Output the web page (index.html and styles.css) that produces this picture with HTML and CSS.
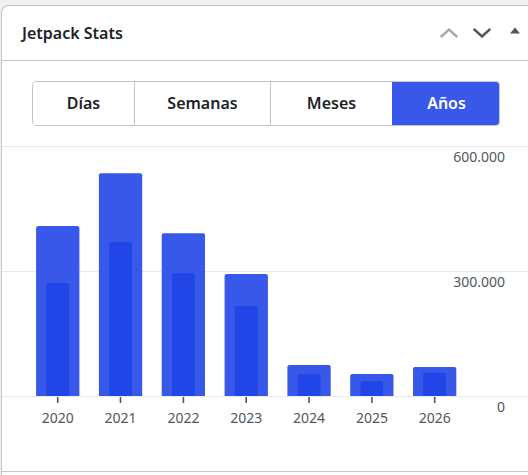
FILE: index.html
```html
<!DOCTYPE html>
<html>
<head>
  <meta charset="UTF-8">
  <title>Jetpack Stats</title>
  <link rel="stylesheet" href="styles.css">
</head>
<body>

  <div class="postbox">
    <div class="postbox-header">
      <h2 class="hndle">Jetpack Stats</h2>
      <div class="handle-actions">
        <button class="handle-order up" aria-label="Subir">
          <svg width="18" height="10" viewBox="0 0 18 10"><path d="M0.8 9 L9 1.5 L17.2 9" fill="none" stroke="currentColor" stroke-width="2.4"/></svg>
        </button>
        <button class="handle-order down" aria-label="Bajar">
          <svg width="18" height="10" viewBox="0 0 18 10"><path d="M0.8 1 L9 8.5 L17.2 1" fill="none" stroke="currentColor" stroke-width="2.4"/></svg>
        </button>
        <button class="handlediv" aria-label="Cerrar">
          <svg width="10" height="7" viewBox="0 0 10 7"><path d="M0 6.5 L5 0.5 L10 6.5 Z" fill="currentColor"/></svg>
        </button>
      </div>
    </div>

    <div class="inside">
      <div class="periods">
        <button class="period">Días</button>
        <button class="period">Semanas</button>
        <button class="period">Meses</button>
        <button class="period active">Años</button>
      </div>

      <svg class="chart" width="526" height="335" viewBox="0 0 526 335">
        <defs>
          <clipPath id="plot"><rect x="0" y="0" width="526" height="260"/></clipPath>
        </defs>
        <g class="grid">
          <line x1="0" y1="10.5" x2="526" y2="10.5"/>
          <line x1="0" y1="135.5" x2="526" y2="135.5"/>
          <line x1="0" y1="260.5" x2="526" y2="260.5"/>
        </g>
        <g clip-path="url(#plot)">
          <!-- visitas (fuera) / vistas únicas (dentro) -->
          <rect class="bar" x="34.1" y="90" width="43.3" height="174" rx="2"/>
          <rect class="bar-in" x="44.4" y="147" width="22.7" height="117" rx="2"/>
          <rect class="bar" x="96.9" y="37.3" width="43.3" height="227" rx="2"/>
          <rect class="bar-in" x="107.2" y="106" width="22.7" height="158" rx="2"/>
          <rect class="bar" x="159.7" y="97.3" width="43.3" height="167" rx="2"/>
          <rect class="bar-in" x="170" y="137.3" width="22.7" height="127" rx="2"/>
          <rect class="bar" x="222.6" y="138" width="43.3" height="126" rx="2"/>
          <rect class="bar-in" x="232.9" y="170" width="22.7" height="94" rx="2"/>
          <rect class="bar" x="285.4" y="229" width="43.3" height="35" rx="2"/>
          <rect class="bar-in" x="295.7" y="238.3" width="22.7" height="26" rx="2"/>
          <rect class="bar" x="348.2" y="238" width="43.3" height="26" rx="2"/>
          <rect class="bar-in" x="358.5" y="245.3" width="22.7" height="19" rx="2"/>
          <rect class="bar" x="411" y="231" width="43.3" height="33" rx="2"/>
          <rect class="bar-in" x="421.3" y="236.7" width="22.7" height="27" rx="2"/>
        </g>
        <g class="ticks">
          <line x1="55.7" y1="261" x2="55.7" y2="267"/>
          <line x1="118.5" y1="261" x2="118.5" y2="267"/>
          <line x1="181.4" y1="261" x2="181.4" y2="267"/>
          <line x1="244.2" y1="261" x2="244.2" y2="267"/>
          <line x1="307" y1="261" x2="307" y2="267"/>
          <line x1="369.9" y1="261" x2="369.9" y2="267"/>
          <line x1="432.7" y1="261" x2="432.7" y2="267"/>
        </g>
        <g class="x-labels">
          <text x="55.7" y="286.5">2020</text>
          <text x="118.5" y="286.5">2021</text>
          <text x="181.4" y="286.5">2022</text>
          <text x="244.2" y="286.5">2023</text>
          <text x="307" y="286.5">2024</text>
          <text x="369.9" y="286.5">2025</text>
          <text x="432.7" y="286.5">2026</text>
        </g>
        <g class="y-labels">
          <text x="503" y="25.5">600.000</text>
          <text x="503" y="150.5">300.000</text>
          <text x="503" y="276">0</text>
        </g>
      </svg>
    </div>

    <div class="postbox-footer"></div>
  </div>

</body>
</html>
```

FILE: styles.css
```css
html, body {
  overflow: hidden;
}

body {
  margin: 0;
  height: 475px;
  background-color: #f0f0f1;
  font-family: "Noto Sans", "Open Sans", sans-serif;
  color: #1d2327;
}

/* la caja sigue por la derecha, fuera de la ventana */
.postbox {
  margin: 5px 0 0 1px;
  width: 526px;
  background-color: #fff;
  border: 1px solid #c3c4c7;
  border-right: none;
  border-radius: 8px 0 0 0;
}

.postbox-header {
  height: 54px;
  display: flex;
  align-items: center;
  border-bottom: 1px solid #c3c4c7;
  padding-left: 20px;
}

.hndle {
  margin: 0;
  font-size: 16px;
  font-weight: 600;
  line-height: 1;
  padding-bottom: 1px;
  flex: 1;
}

.handle-actions {
  display: flex;
  align-items: center;
  padding-right: 8px;
  padding-bottom: 1px;
}

.handle-actions button {
  border: none;
  background: none;
  padding: 0;
  display: flex;
  cursor: pointer;
}

.handle-order {
  color: #50575e;
}

.handle-order.up {
  color: #a7aaad;
  margin-right: 15px;
}

.handle-order.down {
  margin-right: 19px;
}

.handlediv {
  color: #50575e;
  margin-top: -5px;
}

.inside {
  padding-top: 20px;
}

.periods {
  display: grid;
  grid-template-columns: 101px 136px 122px 109px;
  margin-left: 30px;
  width: 468px;
  height: 45px;
  box-sizing: border-box;
  border: 1px solid #c3c4c7;
  border-radius: 4px;
  overflow: hidden;
}

.period {
  border: none;
  border-left: 1px solid #c3c4c7;
  background-color: #fff;
  font-family: inherit;
  font-size: 16px;
  font-weight: 600;
  color: #1d2327;
  padding: 0 0 2px 0;
  cursor: pointer;
}

.period:first-child {
  border-left: none;
}

.period.active {
  background-color: #3858e9;
  color: #fff;
  border-left: none;
}

.chart {
  display: block;
  margin-top: 10px;
}

.grid line {
  stroke: #e8e8e8;
  stroke-width: 1;
}

.bar {
  fill: #3858e9;
}

.bar-in {
  fill: #2145e6;
}

.ticks line {
  stroke: #50575e;
  stroke-width: 1.6;
}

.x-labels text,
.y-labels text {
  font-size: 14px;
  fill: #50575e;
}

.x-labels text {
  text-anchor: middle;
}

.y-labels text {
  text-anchor: end;
}

.postbox-footer {
  height: 3px;
  border-top: 1px solid #c3c4c7;
}
```
